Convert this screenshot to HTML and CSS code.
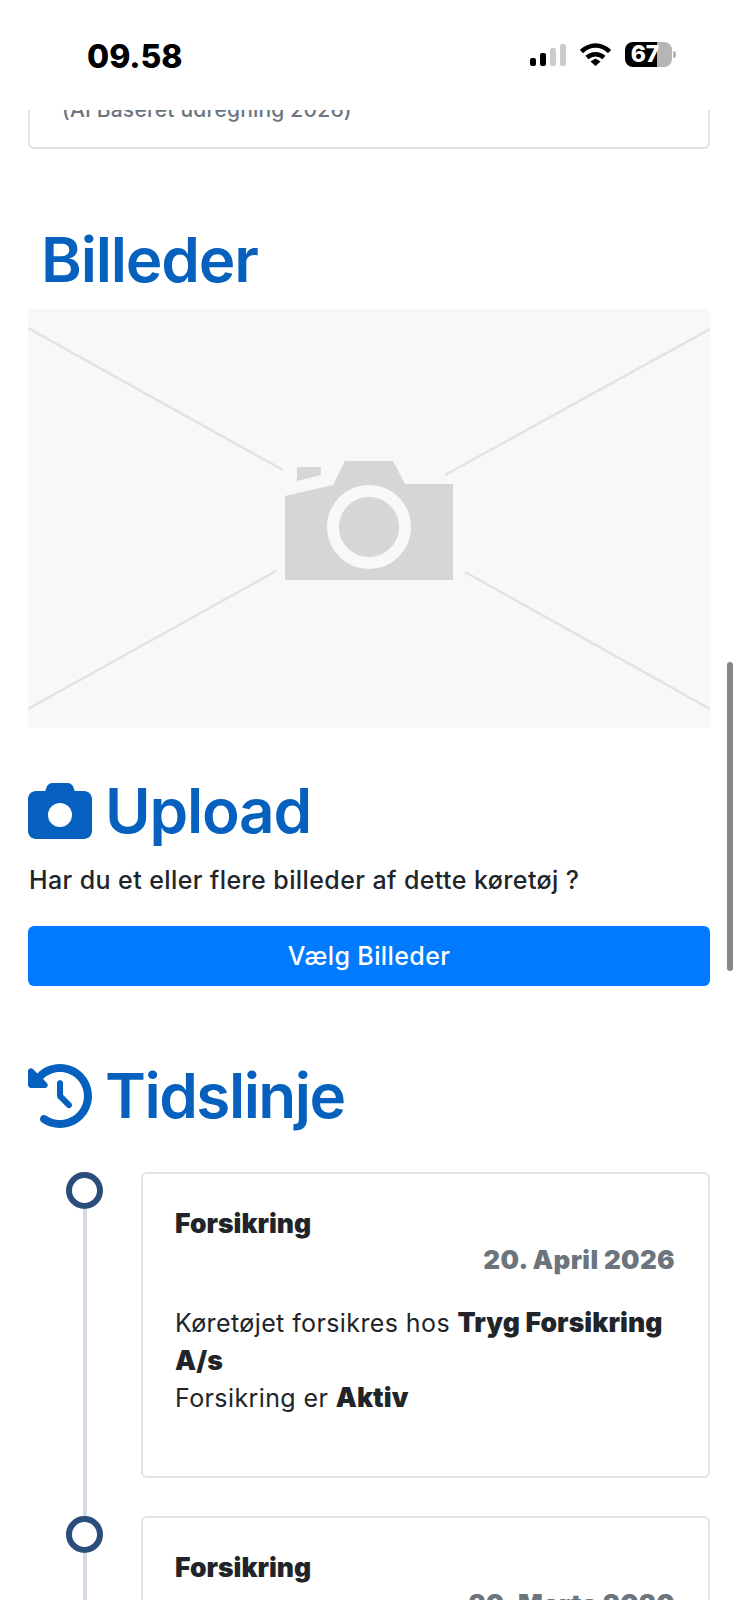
FILE: index.html
```html
<!DOCTYPE html>
<html lang="da">
<head>
  <meta charset="UTF-8">
  <meta name="viewport" content="width=device-width, initial-scale=1.0">
  <title>Billeder</title>
  <link rel="stylesheet" href="styles.css">
</head>
<body>
  <header class="status-bar">
    <span class="clock">09.58</span>
    <div class="status-icons">
      <div class="signal">
        <span class="bar bar-1"></span>
        <span class="bar bar-2"></span>
        <span class="bar bar-3"></span>
        <span class="bar bar-4"></span>
      </div>
      <svg class="wifi" viewBox="0 0 31 23">
        <path d="M1.500 8.500C10 0.500 21 0.500 29.500 8.500" />
        <path d="M7 14.500C12 10 19 10 24 14.500" />
        <polygon class="wifi-dot" points="10.500,18.500 15.500,15.500 20.500,18.500 15.500,23" />
      </svg>
      <div class="battery"><span class="battery-level">67</span><span class="battery-nub"></span></div>
    </div>
  </header>

  <main class="page">
    <div class="stub-card">
      <p class="stub-text">(AI Baseret udregning 2026)</p>
    </div>

    <h2 class="title title-billeder">Billeder</h2>
    <svg class="placeholder" viewBox="0 0 682 419">
      <g class="placeholder-lines">
        <line x1="0" y1="19" x2="255" y2="161" />
        <line x1="682" y1="20" x2="417" y2="166" />
        <line x1="0" y1="400" x2="248" y2="262" />
        <line x1="682" y1="400" x2="437" y2="263" />
      </g>
      <polygon class="placeholder-camera" points="269,158 293,158 293,166 269,172" />
      <polygon class="placeholder-camera" points="257,187 305,176 317,152 365,152 377,175 425,175 425,271 257,271" />
      <circle class="placeholder-ring" cx="341" cy="218" r="36" />
    </svg>

    <h2 class="title title-upload">
      <svg class="title-icon" viewBox="0 0 512 512"><path d="M149.1 64.8L138.7 96H64C28.7 96 0 124.7 0 160V416c0 35.3 28.7 64 64 64H448c35.300 0 64-28.700 64-64V160c0-35.300-28.700-64-64-64H373.300L362.900 64.800C356.400 45.200 338.100 32 317.400 32H194.600c-20.700 0-39 13.200-45.500 32.800zM256 192a96 96 0 1 1 0 192 96 96 0 1 1 0-192z"/></svg>
      Upload
    </h2>
    <p class="lead">Har du et eller flere billeder af dette køretøj ?</p>
    <button type="button" class="btn-upload">Vælg Billeder</button>

    <h2 class="title title-timeline">
      <svg class="title-icon" viewBox="0 0 512 512"><path d="M75 75L41 41C25.900 25.900 0 36.600 0 57.900V168c0 13.300 10.700 24 24 24H134.100c21.400 0 32.100-25.900 17-41l-30.800-30.800C155 85.500 203 64 256 64c106 0 192 86 192 192s-86 192-192 192c-40.800 0-78.600-12.700-109.700-34.400c-14.500-10.100-34.400-6.600-44.600 7.900s-6.600 34.400 7.900 44.600C151.200 495 201.700 512 256 512c141.400 0 256-114.600 256-256S397.400 0 256 0C185.300 0 121.300 28.700 75 75zm181 53c-13.300 0-24 10.700-24 24V256c0 6.400 2.500 12.500 7 17l72 72c9.400 9.400 24.600 9.400 33.900 0s9.400-24.600 0-33.900l-65-65V152c0-13.300-10.700-24-24-24z"/></svg>
      Tidslinje
    </h2>

    <div class="timeline">
      <div class="tl-item">
        <div class="tl-rail"><span class="tl-dot"></span><span class="tl-line"></span></div>
        <div class="tl-card">
          <h3 class="tl-heading">Forsikring</h3>
          <div class="tl-date">20. April 2026</div>
          <p class="tl-text">Køretøjet forsikres hos <b>Tryg Forsikring A/s</b><br>Forsikring er <b>Aktiv</b></p>
        </div>
      </div>
      <div class="tl-item">
        <div class="tl-rail"><span class="tl-dot"></span><span class="tl-line"></span></div>
        <div class="tl-card">
          <h3 class="tl-heading">Forsikring</h3>
          <div class="tl-date">20. Marts 2020</div>
          <p class="tl-text">Køretøjet forsikres hos <b>Tryg Forsikring A/s</b><br>Forsikring er <b>Aktiv</b></p>
        </div>
      </div>
    </div>
  </main>

  <div class="scrollbar"></div>
</body>
</html>
```

FILE: styles.css
```css
* {
  margin: 0;
  padding: 0;
  box-sizing: border-box;
}

html, body {
  height: 1600px;
  overflow: hidden;
}

body {
  font-family: Inter, "Liberation Sans", sans-serif;
  background-color: #fff;
  color: #212529;
}

/* status bar */
.status-bar {
  height: 110px;
  display: flex;
  justify-content: space-between;
  align-items: flex-start;
  padding: 40px 62px 0 87px;
}

.clock {
  font-size: 32px;
  line-height: 34px;
  font-weight: 800;
  color: #000;
}

.status-icons {
  display: flex;
  align-items: flex-start;
  gap: 14px;
  padding-top: 2px;
}

.signal {
  display: flex;
  align-items: flex-end;
  gap: 4px;
  height: 24px;
}

.bar {
  width: 6px;
  border-radius: 2px;
  background-color: #ccc;
}

.bar-1 { height: 8px; background-color: #000; }
.bar-2 { height: 13px; background-color: #000; }
.bar-3 { height: 18px; }
.bar-4 { height: 22px; }

.wifi {
  width: 31px;
  height: 23px;
  margin-top: 1px;
  fill: none;
  stroke: #000;
  stroke-width: 4.5;
}

.wifi-dot {
  fill: #000;
  stroke: none;
}

.battery {
  display: flex;
  align-items: center;
}

.battery-level {
  width: 47px;
  height: 25px;
  border-radius: 8px;
  background: linear-gradient(to right, #000 68%, #b5b5b5 68%);
  color: #fff;
  font-size: 23px;
  line-height: 25px;
  font-weight: 800;
  text-align: center;
  padding-right: 7px;
}

.battery-nub {
  width: 3px;
  height: 7px;
  margin-left: 1px;
  border-radius: 0 3px 3px 0;
  background-color: #b5b5b5;
}

/* page content */
.page {
  padding: 0 28px;
}

.stub-card {
  height: 39px;
  border: 2px solid #e0e2e4;
  border-top: 0;
  border-radius: 0 0 6px 6px;
  overflow: hidden;
  padding-left: 32px;
}

.stub-text {
  margin-top: -13px;
  font-size: 21px;
  line-height: 26px;
  font-weight: 500;
  letter-spacing: 0.2px;
  color: #6c757d;
}

.title {
  display: flex;
  align-items: center;
  gap: 13px;
  font-size: 62px;
  line-height: 74px;
  font-weight: 600;
  letter-spacing: -1.2px;
  color: #0561bd;
}

.title-billeder {
  margin-top: 74px;
  padding-left: 13px;
}

.title-icon {
  width: 64px;
  height: 64px;
  flex: none;
  fill: #0561bd;
}

.placeholder {
  display: block;
  width: 682px;
  height: 419px;
  margin-top: 12px;
  background-color: #f8f8f8;
}

.placeholder-lines line {
  stroke: #e3e3e3;
  stroke-width: 2.500;
}

.placeholder-camera {
  fill: #d6d6d6;
}

.placeholder-ring {
  fill: #d6d6d6;
  stroke: #f8f8f8;
  stroke-width: 12;
}

.title-upload {
  margin-top: 46px;
}

.lead {
  margin-top: 15px;
  padding-left: 1px;
  font-size: 25px;
  line-height: 34px;
  font-weight: 500;
  letter-spacing: 0.4px;
}

.btn-upload {
  display: block;
  width: 100%;
  height: 60px;
  margin-top: 29px;
  border: 0;
  border-radius: 6px;
  background-color: #007bff;
  color: #fff;
  font-family: inherit;
  font-size: 25px;
  font-weight: 500;
  letter-spacing: 0.4px;
}

.title-timeline {
  margin-top: 73px;
  letter-spacing: -1.500px;
}

/* timeline */
.timeline {
  margin-top: 39px;
  padding-left: 38px;
}

.tl-item {
  display: flex;
  gap: 38px;
}

.tl-rail {
  width: 37px;
  flex: none;
  display: flex;
  flex-direction: column;
  align-items: center;
}

.tl-dot {
  width: 37px;
  height: 37px;
  flex: none;
  border: 6px solid #2a4d7c;
  border-radius: 50%;
  background-color: #fff;
}

.tl-line {
  width: 4px;
  flex: 1;
  background-color: #d3dae3;
}

.tl-card {
  flex: 1;
  min-height: 306px;
  margin-bottom: 38px;
  padding: 33px 33px 33px 32px;
  border: 2px solid #e0e2e4;
  border-radius: 6px;
}

.tl-heading {
  font-size: 26.500px;
  line-height: 32px;
  font-weight: 900;
}

.tl-date {
  font-size: 26px;
  line-height: 42px;
  font-weight: 900;
  letter-spacing: 0.350px;
  color: #6c757d;
  text-align: right;
}

.tl-text {
  margin-top: 24px;
  font-size: 25px;
  line-height: 37.500px;
  letter-spacing: 0.4px;
}

.tl-text b {
  font-size: 26.500px;
  line-height: 1;
  font-weight: 900;
  letter-spacing: 0.1px;
}

/* overlay scrollbar */
.scrollbar {
  position: fixed;
  top: 662px;
  right: 5px;
  width: 6px;
  height: 309px;
  border-radius: 3px;
  background-color: #888;
}
```
